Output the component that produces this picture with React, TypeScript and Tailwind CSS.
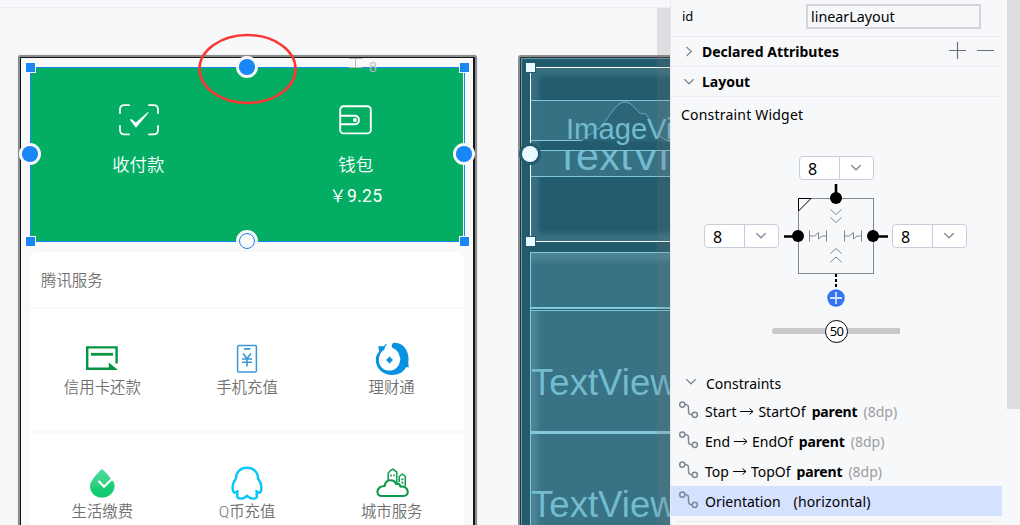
import React from "react";

const cjk = "font-['Roboto','Noto_Sans_CJK_SC',sans-serif]";

function Handle({ cls, dark = false }: { cls: string; dark?: boolean }) {
  return (
    <div
      className={`absolute h-[11px] w-[11px] border ${cls} ${
        dark ? "border-[#225b6d] bg-[#e8fafe]" : "border-white bg-[#1886f7]"
      }`}
    />
  );
}

function Anchor({ cls, hollow = false }: { cls: string; hollow?: boolean }) {
  return (
    <svg className={`absolute ${cls}`} width="22" height="22" viewBox="0 0 22 22">
      <circle cx="11" cy="11" r="11" fill="#f9f9f9" />
      {hollow ? (
        <circle cx="11" cy="11" r="7.5" fill="#f9f9f9" stroke="#1886f7" />
      ) : (
        <circle cx="11" cy="11" r="8.1" fill="#1886f7" />
      )}
    </svg>
  );
}

function ScanIcon() {
  return (
    <svg width="40" height="32" viewBox="0 0 40 32" fill="none" stroke="#fff" strokeWidth="1.8" strokeLinecap="round">
      <path d="M1 9V5.5Q1 1.2 5.5 1.2H10M30 1.2H34.5Q39 1.2 39 5.5V9M1 22V26Q1 30.4 5.5 30.4H10M30 30.4H34.5Q39 30.4 39 26V22" />
      <path d="M10.8 15.8L12.4 15L16.8 18.5L29 8L29.6 8.8L17 23.8Z" fill="#fff" stroke="none" />
    </svg>
  );
}

function WalletIcon() {
  return (
    <svg width="33" height="30" viewBox="0 0 33 30" fill="none" stroke="#fff" strokeWidth="1.9">
      <rect x="1.2" y="1.2" width="30.6" height="27.2" rx="3.5" />
      <path d="M1.2 10.7H16.5A4.4 4.4 0 0 1 16.5 19.3H1.2" />
      <circle cx="16" cy="15" r="2" fill="#fff" stroke="none" />
    </svg>
  );
}

function CardIcon() {
  return (
    <svg width="34" height="34" viewBox="0 0 34 34" fill="none" stroke="#049443" strokeWidth="2.4">
      <path d="M31.6 21.5V5.4H2.2V26.8H25" />
      <path d="M6 12.3H28" strokeWidth="2.8" />
      <path d="M23.8 20.6L33 28H23.8Z" fill="#049443" stroke="none" />
    </svg>
  );
}

function PhoneIcon() {
  return (
    <svg width="34" height="34" viewBox="0 0 34 34" fill="none" stroke="#3d97d3" strokeWidth="1.5">
      <rect x="7.6" y="3.6" width="18.8" height="26.4" rx="1" />
      <path d="M14 6.9H20.4" strokeWidth="1.8" />
      <path d="M13 11.6L17 16.6L21 11.6M17 16.6V24.5M12 17H22M12 20.2H22" strokeWidth="1.6" />
    </svg>
  );
}

function WhaleIcon() {
  return (
    <svg width="34" height="34" viewBox="0 0 34 34" fill="#0793df">
      <path d="M11.2 1.8L8.8 4.2L3.2 4.2L4.2 9.2C2 11.8 .8 14.6 .8 18C.8 26.5 8 33 17 33C23.5 33 28.6 30 31.3 25L33.8 25.6L33.2 21C33.6 18.5 33.7 16 33.2 13.5C31.8 6 26.5 .5 19 .8C16.6 1.2 16.2 4.4 17.5 6C21.5 7.4 24.2 10.8 24.6 14.8L25.4 16.4L24.6 20.4C23.5 25 19.8 28.6 14.6 28.6C8.4 28.6 3.9 24 3.9 18.4C3.9 12.8 6 9.6 9.6 7.2Q9.6 4.6 12 2Z" />
      <path d="M14.5 14.6L18 18.1L14.5 21.6L11 18.1Z" />
    </svg>
  );
}

function DropIcon() {
  return (
    <svg width="34" height="34" viewBox="0 0 34 34">
      <defs>
        <linearGradient id="drop" x1="0" y1="0" x2="0" y2="1">
          <stop offset="0" stopColor="#4bdd9d" />
          <stop offset="0.55" stopColor="#32d083" />
          <stop offset="1" stopColor="#0bc669" />
        </linearGradient>
      </defs>
      <path d="M17 3C18 3.6 29 14 29 20A12 11.5 0 0 1 5 20C5 14 16 3.6 17 3Z" fill="url(#drop)" />
      <path d="M5.3 22Q17 22 28.3 14.5Q33 24 24 29.5Q17 32.5 10 29.5Q6 26.5 5.3 22Z" fill="#13cb70" opacity=".65" />
      <path d="M13.5 14.8L19 20.7L27 13" fill="none" stroke="#fff" strokeWidth="2" />
    </svg>
  );
}

function PenguinIcon() {
  return (
    <svg width="34" height="34" viewBox="0 0 34 34" fill="none" stroke="#05c8fa" strokeWidth="2.4" strokeLinecap="round" strokeLinejoin="round">
      <path d="M6 12.5C6 5.5 11 1.8 17 1.8S28 5.5 28 12.5C29.8 15 31.4 18.5 31.4 21.5C31.4 24.5 30.3 26.8 29.3 26.8C28.2 26.8 27.8 25.6 26.3 25.2M27.2 25.8C27.2 27 26.8 27.6 26.4 28.2C28.2 31.2 25.8 32.6 22.6 32.6C19.6 32.6 18.6 31 17 29.8C15.4 31 14.4 32.6 11.4 32.6C8.2 32.6 5.8 31.2 7.6 28.2C7.2 27.6 6.8 27 6.8 25.8M7.7 25.2C6.2 25.6 5.8 26.8 4.7 26.8C3.7 26.8 2.6 24.5 2.6 21.5C2.6 18.5 4.2 15 6 12.5" />
    </svg>
  );
}

function CityIcon() {
  return (
    <svg width="34" height="34" viewBox="0 0 34 34" fill="none" stroke="#0a9a49" strokeWidth="1.5" strokeLinejoin="round">
      <path d="M13.2 14V7.4L15.5 4.4L18 3.2L21.8 6.2V17M24.2 16V10.5L27.5 8L30.3 10.5V20" />
      <path d="M6.5 30H28C32.6 30 33.6 26.5 32 23.2C30.5 20.8 28 20.2 25.5 20.6C24.5 17.3 22 17.6 21 17.9C19.5 13.5 11 12 9.6 20C5.6 20 2.4 22.2 2.4 25.8C2.4 28.4 4.5 30 6.5 30Z" strokeWidth="2.1" />
      <path d="M15.2 9.3H16.8M18.2 9.3H19.8M26.4 13.3H28.4M26.4 16.6H28.4" strokeWidth="1.7" />
    </svg>
  );
}

function Service({ icon, label }: { icon: React.ReactNode; label: string }) {
  return (
    <div className="flex flex-1 flex-col items-center pt-[33px]">
      {icon}
      <span className="mt-[1px] text-[15.4px] leading-[22px] font-[350] whitespace-nowrap">{label}</span>
    </div>
  );
}

function Phone() {
  return (
    <div className="mt-[47px] ml-[18px] h-[500px] w-[459px] shrink-0 rounded-t-[3px] border-x-[2px] border-t-[2px] border-[#8c8d8e] bg-[#151617] pt-px pr-[2px] pl-px shadow-[0_0_1px_#999]">
      <div className="h-full bg-[#f9f9f9] px-[9px] pt-[9px]">
        <div className="-mr-px h-[175px] border border-[#1886f7] bg-[#03ae64] shadow-[inset_-1px_0_0_#f9f9f9]">
          <div className="flex text-white">
            <div className="flex w-[217px] flex-col items-center pt-[36px]">
              <ScanIcon />
              <span className="mt-[17px] -ml-[2px] text-[17.4px] leading-[24px] font-[350]">收付款</span>
            </div>
            <div className="flex w-[217px] flex-col items-center pt-[37px]">
              <WalletIcon />
              <span className="mt-[18px] text-[17.4px] leading-[24px] font-[350]">钱包</span>
              <span className="mt-[7px] text-[17.6px] leading-[24px] tracking-[0.3px]">
                <span className="font-[350]">￥</span>9.25
              </span>
            </div>
          </div>
        </div>
        <div className="mt-[10px] flex h-[55px] items-center rounded-t-[8px] bg-white pt-[4px] pl-[11px] text-[15.4px] font-[350] text-[#707070]">腾讯服务</div>
        <div className="mt-[2px] flex h-[122px] bg-white text-[#707070]">
          <Service icon={<CardIcon />} label="信用卡还款" />
          <Service icon={<PhoneIcon />} label="手机充值" />
          <Service icon={<WhaleIcon />} label="理财通" />
        </div>
        <div className="mt-[2px] flex h-[120px] bg-white text-[#707070]">
          <Service icon={<DropIcon />} label="生活缴费" />
          <Service icon={<PenguinIcon />} label="Q币充值" />
          <Service icon={<CityIcon />} label="城市服务" />
        </div>
      </div>
    </div>
  );
}

function Blueprint() {
  return (
    <div className="mt-[47px] ml-[41px] h-[500px] w-[152px] shrink-0 overflow-hidden rounded-tl-[3px] border-t-[2px] border-l-[2px] border-[#8c8d8e] bg-[#303132] pt-px pl-px font-['Liberation_Sans',sans-serif] text-[#72bbd0]">
      <div className="h-full border-t border-l border-[#5a9aac] bg-[#225b6d] pt-[8px] pl-[8px]">
        <div className="relative h-[175px] w-[160px] overflow-hidden border border-white shadow-[inset_8px_8px_5px_#387083,inset_0_-8px_5px_#387083]">
          <div className="relative mt-[32px] h-[41px] border-y border-[#82c9db] bg-[#387285]/90">
            <svg className="absolute top-0 left-0" width="150" height="42" fill="#2d6578" stroke="#64adc2">
              <path d="M50 40C54 38 54 34 58 34C63 32 64 29 69 27C74 23 84 1 94 1C102 1 106 12 111 13C116 11 117 16 119 22C124 33 132 39 141 41" />
            </svg>
            <div className="absolute top-[12px] left-[35px] text-[29.2px] leading-[32px] whitespace-nowrap">ImageView</div>
          </div>
          <div className="mt-[9px] h-[27px] overflow-hidden border-y border-[#82c9db] bg-[#387285]/90">
            <div className="-mt-[15px] pl-[24px] text-[41.5px] leading-[40px] tracking-[0.2px] whitespace-nowrap">TextView</div>
          </div>
        </div>
        <div className="mt-[10px] h-[55px] w-[160px] border-t border-l border-[#82c9db] bg-[#387285] shadow-[inset_0_8px_5px_#4b8494]" />
        <div className="h-[124px] border-t-2 border-l border-[#82c9db] bg-[#387285] shadow-[inset_9px_0_4px_-2px_#4b8494]">
          <div className="h-[2px] border-b border-[#82c9db] bg-[#225b6d]" />
          <div className="pt-[52px] text-[36.6px] leading-[40px]">TextView</div>
        </div>
        <div className="h-[125px] border-t-[3px] border-l border-[#82c9db] bg-[#387285] shadow-[inset_9px_0_4px_-2px_#4b8494]">
          <div className="pt-[51px] text-[36.6px] leading-[40px]">TextView</div>
        </div>
      </div>
    </div>
  );
}

function Chevron({ right = false }: { right?: boolean }) {
  return (
    <svg width="12" height="12" viewBox="0 0 12 12" fill="none" stroke="#818594" strokeWidth="1.2">
      {right ? <path d="M3.5 1L8.3 5.5L3.5 10" /> : <path d="M1.3 3.2L6 7.8L10.7 3.2" />}
    </svg>
  );
}

function Margin() {
  return (
    <div className="flex h-[24px] w-[75px] rounded-[4px] border border-[#c9ccd9] bg-white">
      <div className="flex w-[40px] items-center border-r border-[#c9ccd9] pt-px pl-[8px] text-[16px]">8</div>
      <div className="flex flex-1 items-center justify-center pr-[2px]">
        <Chevron />
      </div>
    </div>
  );
}

function Widget() {
  return (
    <svg width="104" height="124" viewBox="0 0 104 124" fill="none" stroke="#818594">
      <rect x="14.5" y="14.5" width="75" height="75" />
      <path d="M14.5 27V14.5H27Z" stroke="#000" />
      <path d="M52 -1V14M-1 52.5H14M90 52.5H104" stroke="#000" strokeWidth="2.6" />
      <path d="M52 90V103" stroke="#000" strokeWidth="2" strokeDasharray="3 2" />
      <g fill="#000" stroke="none">
        <circle cx="52" cy="14" r="6" />
        <circle cx="14" cy="52" r="6" />
        <circle cx="89" cy="52" r="6" />
      </g>
      <path d="M46.5 25.5L52 30.5L57.5 25.5M46.5 33.5L52 38.5L57.5 33.5M46.5 69.5L52 64.5L57.5 69.5M46.5 78L52 73L57.5 78" />
      <path d="M25.5 46.5V57.5M42.5 46.5V57.5M25.5 52H30.5L34.5 48.5V55L38 52H42.5M60.5 46.5V57.5M77.5 46.5V57.5M60.5 52H65.5L69.5 48.5V55L73 52H77.5" />
      <circle cx="52" cy="114" r="8.7" fill="#3574f0" stroke="none" />
      <path d="M46 114H58M52 108V120" stroke="#d5e2ff" strokeWidth="1.8" />
    </svg>
  );
}

function LinkIcon() {
  return (
    <svg className="relative -top-px" width="20" height="18" viewBox="0 0 20 18" fill="none" stroke="#818594" strokeWidth="1.5">
      <circle cx="3.3" cy="3.6" r="2.6" />
      <circle cx="15.8" cy="13.8" r="2.6" />
      <path d="M6 3.5C9.5 3.5 9.5 5 9.5 8.2C9.5 12 9.5 13.8 13 13.8" />
    </svg>
  );
}

function Constraint({ side, target }: { side: string; target?: string }) {
  return (
    <div className={`flex h-[30px] w-[331px] items-center pl-[8px] ${target ? "" : "bg-[#d4e1ff]"}`}>
      <LinkIcon />
      <span className="ml-[6px]">{side}</span>
      {target ? (
        <>
          <svg className="mx-[4px]" width="14" height="10" viewBox="0 0 14 10" fill="none" stroke="#000">
            <path d="M0 5.5H13M9.5 2.5L13 5.5L9.5 8.5" />
          </svg>
          <span>{target}</span>
          <b className="ml-[6px] tracking-[-0.15px]">parent</b>
          <span className="ml-[6px] text-[#9c9da1]">(8dp)</span>
        </>
      ) : (
        <span className="ml-[13px] tracking-[0.15px]">(horizontal)</span>
      )}
    </div>
  );
}

function Inspector() {
  return (
    <div className="flex min-w-0 flex-1 border-l border-[#e8e9ed] bg-[#f7f8fa] font-['Noto_Sans',sans-serif] text-[14px] text-black">
      <div className="w-[336px] shrink-0">
        <div className="flex h-[37px] w-[331px] items-center border-b border-[#ebecf0] pl-[11px]">
          <span className="-mt-[3px] w-[11px] text-[13px]">id</span>
          <div className="-mt-[4px] ml-[113px] flex h-[25px] w-[175px] items-center border-2 border-[#d3d5db] pt-px pl-[3px] text-[14.3px]">linearLayout</div>
        </div>
        <div className="flex h-[30px] w-[331px] items-center border-b border-[#ebecf0] pl-[12px]">
          <Chevron right />
          <b className="ml-[7px] w-[247px]">Declared Attributes</b>
          <svg className="relative -top-px" width="46" height="17" viewBox="0 0 46 17" stroke="#6c707e" strokeWidth="1.2">
            <path d="M0 8.5H17M8.5 0V17M28 8.5H45" />
          </svg>
        </div>
        <div className="flex h-[30px] w-[331px] items-center border-b border-[#ebecf0] pl-[12px]">
          <Chevron />
          <b className="ml-[7px]">Layout</b>
        </div>
        <div className="flex h-[35px] items-center pl-[10px] tracking-[0.2px]">Constraint Widget</div>
        <div className="mt-[24px] flex pl-[128px]">
          <Margin />
        </div>
        <div className="mt-[4px] flex items-start pl-[33px]">
          <div className="mt-[40px]">
            <Margin />
          </div>
          <div className="mr-[4px] ml-[5px]">
            <Widget />
          </div>
          <div className="mt-[40px]">
            <Margin />
          </div>
        </div>
        <div className="mt-[12px] ml-[101px] flex h-[22px] w-[128px] items-center">
          <div className="h-[6px] w-[53px] rounded-l-[3px] bg-[#c9c9c9]" />
          <div className="flex h-[23px] w-[23px] shrink-0 items-center justify-center rounded-full border border-black bg-white pt-[2px] text-[13px] tracking-[-0.6px]">50</div>
          <div className="h-[6px] flex-1 bg-[#c9c9c9]" />
        </div>
        <div className="mt-[26px] flex h-[28px] items-center pl-[14px]">
          <Chevron />
          <span className="ml-[9px] pt-[2px] text-[14px]">Constraints</span>
        </div>
        <Constraint side="Start" target="StartOf" />
        <Constraint side="End" target="EndOf" />
        <Constraint side="Top" target="TopOf" />
        <Constraint side="Orientation" />
        <div className="mt-[5px] ml-[5px] h-px w-[321px] bg-[#ebecf0]" />
      </div>
      <div className="flex-1">
        <div className="h-[409px] bg-[#dcdddf]" />
      </div>
    </div>
  );
}

export default function App() {
  return (
    <div className="relative flex h-[525px] w-[1020px] overflow-hidden bg-[#f7f8fa]">
      <div className={`w-[670px] shrink-0 overflow-hidden ${cjk}`}>
        <div className="h-[8px] border-b border-[#ebecf0]" />
        <div className="flex">
          <Phone />
          <Blueprint />
        </div>
      </div>
      <Inspector />
      <div className="absolute top-[8px] left-[657px] h-[517px] w-[13px] bg-[#777]/20" />
      <Handle cls="left-[25px] top-[62px]" />
      <Handle cls="left-[459px] top-[62px]" />
      <Handle cls="left-[25px] top-[236px]" />
      <Handle cls="left-[459px] top-[236px]" />
      <Handle cls="left-[525px] top-[62px]" dark />
      <Handle cls="left-[525px] top-[236px]" dark />
      <Anchor cls="left-[236px] top-[56px]" />
      <Anchor cls="left-[19px] top-[143px]" />
      <Anchor cls="left-[453px] top-[143px]" />
      <Anchor cls="left-[236px] top-[230px]" hollow />
      <svg className="absolute top-[142px] left-[518px]" width="24" height="24">
        <circle cx="12" cy="12" r="11" fill="#225b6d" />
        <circle cx="12" cy="12" r="8" fill="#e8fafe" />
      </svg>
      <svg className="absolute top-[32px] left-[197px]" width="102" height="74">
        <ellipse cx="50.5" cy="37" rx="48" ry="34" fill="none" stroke="#f93834" strokeWidth="2.6" />
      </svg>
      <svg className="absolute top-[57px] left-[348px]" width="15" height="12" fill="none" stroke="#b9b9b9">
        <path d="M1 1.5H14M1 10.5H14M7.5 1.5V10.5" />
      </svg>
      <span className="absolute top-[59px] left-[369px] font-['Liberation_Sans',sans-serif] text-[14px] leading-[16px] text-[#b9b9b9]">8</span>
    </div>
  );
}
